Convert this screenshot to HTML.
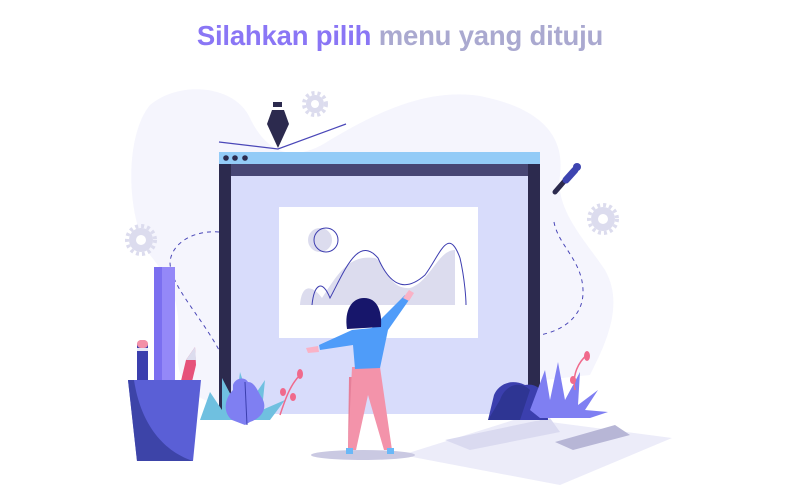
<!DOCTYPE html>
<html><head><meta charset="utf-8"><style>
html,body{margin:0;padding:0;background:#fff;width:800px;height:500px;overflow:hidden}
h1{position:absolute;left:0;top:16px;width:800px;text-align:center;margin:0;font:bold 27.5px/40px "Liberation Sans",sans-serif;color:#8a76f5;letter-spacing:-0.2px}
h1 span{color:#aaa9d0}
svg{position:absolute;left:0;top:0}
</style></head><body>
<h1>Silahkan pilih <span>menu yang dituju</span></h1>
<svg width="800" height="500" viewBox="0 0 800 500">
<path d="M150 105 C180 80 235 85 250 118 C270 160 300 160 330 140 C380 110 430 88 480 96 C540 108 565 135 560 175 C555 210 585 240 605 270 C625 305 605 345 590 375 L250 412 C200 405 175 390 178 350 C182 300 170 280 150 255 C125 215 125 135 150 105Z" fill="#f5f5fd"/>
<g fill="#dcdcee">
<circle cx="315" cy="104" r="9"/><circle cx="141" cy="240" r="12"/><circle cx="603" cy="219" r="12"/>
</g>
<g stroke="#dcdcee" stroke-width="4" stroke-dasharray="3 3">
<circle cx="315" cy="104" r="11" fill="none"/><circle cx="141" cy="240" r="14" fill="none"/><circle cx="603" cy="219" r="14" fill="none"/>
</g>
<g fill="#fff"><circle cx="315" cy="104" r="4"/><circle cx="141" cy="240" r="5"/><circle cx="603" cy="219" r="5"/></g>
<path d="M219 142 L278 149 L346 124" stroke="#4a47b8" stroke-width="1.2" fill="none"/>
<rect x="273" y="102" width="9" height="5" fill="#2c2a4e"/>
<path d="M272 110 L284 110 L289 124 L278 148 L267 124Z" fill="#2c2a4e"/>
<path d="M219 232 C195 230 172 242 170 262 C170 285 200 315 219 350" stroke="#4a47b8" stroke-dasharray="4 4" fill="none"/>
<path d="M554 222 C558 245 582 260 583 290 C584 315 565 330 540 335" stroke="#4a47b8" stroke-dasharray="4 4" fill="none"/>
<rect x="219" y="152" width="321" height="12" fill="#93cbf7"/>
<circle cx="226" cy="158" r="2.8" fill="#2c2a4e"/><circle cx="235" cy="158" r="2.8" fill="#2c2a4e"/><circle cx="245" cy="158" r="2.8" fill="#2c2a4e"/>
<rect x="219" y="164" width="321" height="247" fill="#2c2a4e"/>
<rect x="231" y="164" width="297" height="12" fill="#474674"/>
<rect x="231" y="176" width="297" height="238" fill="#d8dcfb"/>
<rect x="279" y="207" width="199" height="131" fill="#fff"/>
<path d="M300 305 C302 280 315 288 322 298 C340 270 350 255 375 258 C385 262 388 290 410 288 C430 282 438 250 455 250 L455 305Z" fill="#dcdcee"/>
<circle cx="320" cy="240" r="12" fill="#dcdcee"/>
<circle cx="326" cy="240" r="12" fill="none" stroke="#3d3db0" stroke-width="1"/>
<path d="M312 305 C314 285 322 278 330 298 C345 270 358 235 378 258 C392 290 408 290 425 275 C440 255 448 225 460 258 C465 280 466 300 466 305" fill="none" stroke="#3d3db0" stroke-width="1"/>
<path d="M555 192 L568 177" stroke="#2c2a4e" stroke-width="5" stroke-linecap="round"/>
<path d="M566 180 L575 170" stroke="#3d44b0" stroke-width="7" stroke-linecap="round"/>
<circle cx="577" cy="167" r="4" fill="#3d44b0"/>
<path d="M402 455 L520 418 L672 438 L560 485 Z" fill="#ececf9"/>
<ellipse cx="363" cy="455" rx="52" ry="5" fill="#cac9e2"/>
<path d="M445 440 L550 418 L560 432 L470 450Z" fill="#dadaf0"/>
<path d="M555 442 L615 425 L630 435 L573 450Z" fill="#b7b6d6"/>
<path d="M488 420 L494 395 C498 385 510 378 525 385 C540 382 548 395 548 420Z" fill="#3b3fae"/>
<path d="M500 400 C505 385 520 380 530 390 L520 420 L488 420Z" fill="#2e3593"/>
<g fill="#7f7ff2">
<path d="M530 410 L545 370 L550 400 L558 362 L565 400 L580 372 L578 405 L598 390 L585 410 L608 412 L590 418 L540 418Z"/>
</g>
<path d="M575 390 C572 375 578 362 588 354" stroke="#f06a8c" stroke-width="1.5" fill="none"/>
<ellipse cx="587" cy="356" rx="3" ry="5" fill="#f06a8c"/>
<ellipse cx="573" cy="380" rx="3" ry="4" fill="#f06a8c"/>
<g fill="#6fc0e0"><path d="M200 420 L210 392 L222 410 L222 378 L236 405 L240 372 L250 402 L265 380 L262 410 L285 400 L270 420Z"/></g>
<path d="M233 385 C235 378 245 376 248 382 C255 382 258 392 262 398 C268 408 262 418 250 422 L245 425 L232 420 C222 412 225 398 233 390Z" fill="#7f7ff2"/>
<path d="M245 382 L247 425" stroke="#3b3fae" stroke-width="1"/>
<path d="M280 415 C285 400 290 385 300 375" stroke="#f06a8c" stroke-width="1.5" fill="none"/>
<ellipse cx="300" cy="374" rx="3" ry="5" fill="#f06a8c"/><ellipse cx="283" cy="392" rx="3" ry="4" fill="#f06a8c"/><ellipse cx="293" cy="397" rx="3" ry="4" fill="#f06a8c"/>
<rect x="154" y="267" width="21" height="115" fill="#9488f8"/><rect x="154" y="267" width="8" height="115" fill="#7b6ff0"/>
<rect x="137" y="340" width="11" height="45" rx="5" fill="#3b3fae"/><rect x="137" y="340" width="11" height="8" rx="4" fill="#f38fa7"/><rect x="137" y="348" width="11" height="3" fill="#e6e6f7"/>
<path d="M180 385 L186 360 L195 347 L196 365 L190 390Z" fill="#e6527a"/><path d="M186 360 L195 347 L196 360Z" fill="#dcdcee"/>
<path d="M128 380 L201 380 L193 461 L137 461Z" fill="#5a5fd6"/>
<path d="M128 380 L134 380 C140 420 160 450 193 461 L137 461Z" fill="#3d44a8"/>
<path d="M349 377 L361 377 L356 450 L348 450Z" fill="#e67f99"/>
<path d="M352 367 L380 367 L392 450 L384 450 L368 395 L356 450 L348 450Z" fill="#f393aa"/>
<rect x="346" y="448" width="7" height="6" fill="#6ab8f7"/><rect x="387" y="448" width="7" height="6" fill="#6ab8f7"/>
<path d="M352 330 L372 328 L385 315 L405 295 L409 300 L388 330 L380 368 L355 369 L353 345 L320 350 L319 345 Z" fill="#4f9cf9"/>
<path d="M306 348 L318 346 L319 352 L308 353Z" fill="#f9b2c6"/>
<path d="M403 298 L409 290 L414 293 L409 301Z" fill="#f9b2c6"/>
<path d="M347 329 C344 310 352 298 364 298 C378 298 382 312 381 327Z" fill="#17166b"/>
</svg>
</body></html>
